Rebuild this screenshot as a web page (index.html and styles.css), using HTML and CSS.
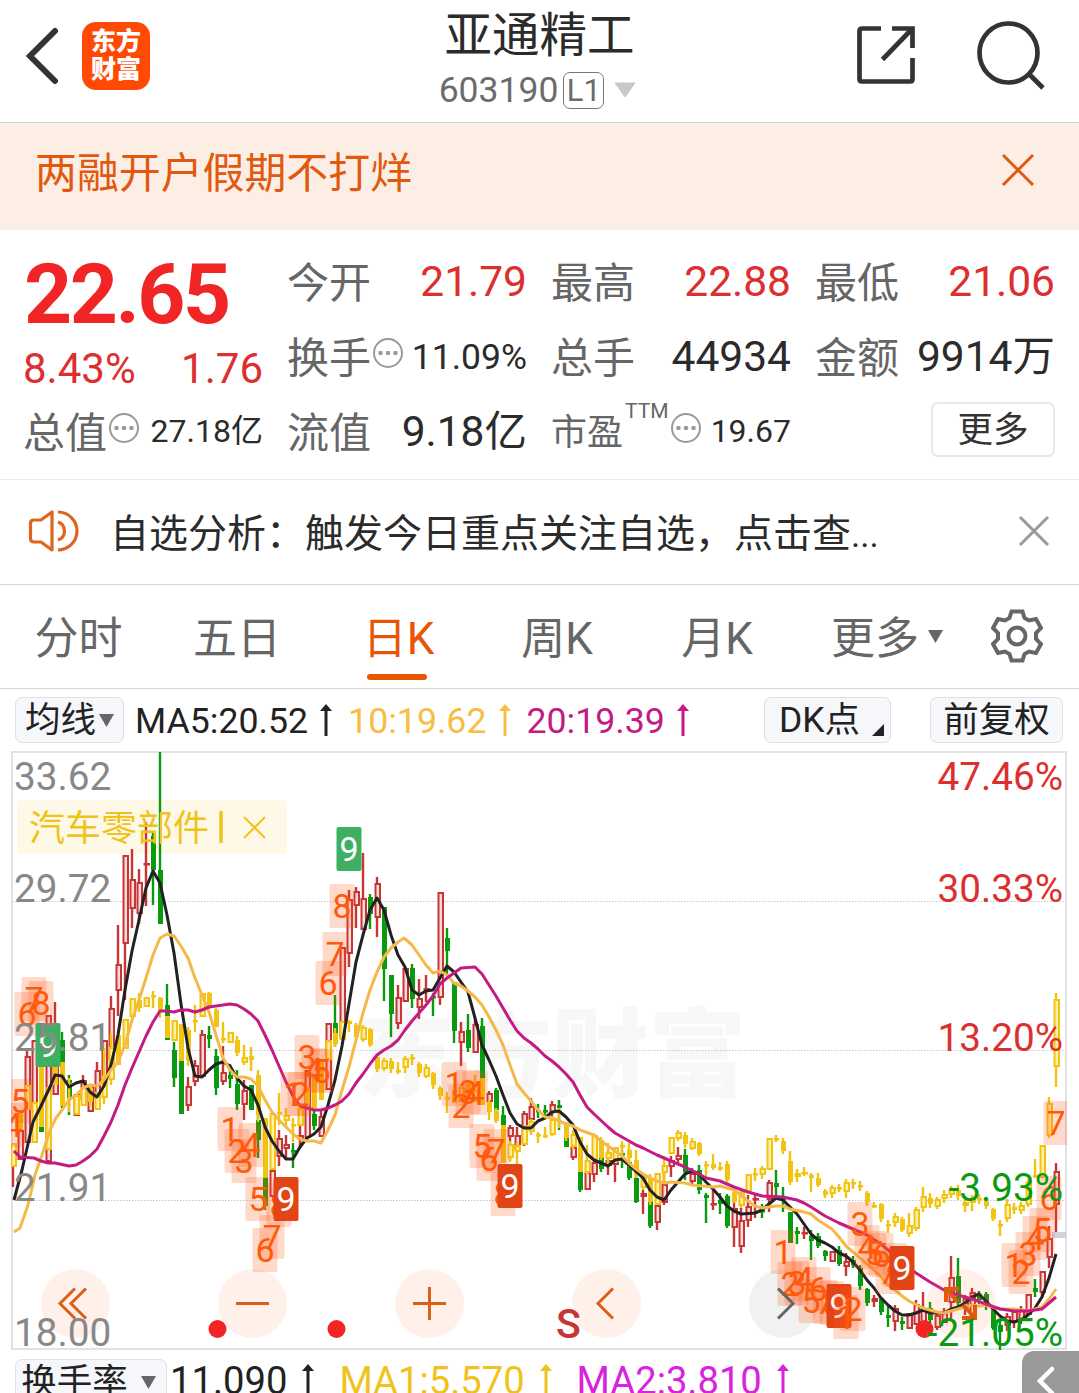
FILE: index.html
```html
<!DOCTYPE html>
<html lang="zh-CN">
<head>
    <meta charset="UTF-8">
    <meta name="viewport" content="width=device-width, initial-scale=1.0">
    <title>亚通精工 603190</title>
    <link rel="stylesheet" href="styles.css">
</head>
<body>
    <div class="header">
        <div class="header-left">
            <svg class="back" width="34" height="58" viewBox="0 0 34 58"><path d="M30 4L5 29L30 54"/></svg>
            <div class="logo"><span>东方</span><span>财富</span></div>
        </div>
        <div class="header-title">
            <h1>亚通精工</h1>
            <div class="code">
                <span>603190</span>
                <span class="level">L1</span>
                <svg width="22" height="16" viewBox="0 0 22 16"><path d="M1 1H21L11 15Z" fill="#c8c8c8" stroke="#c8c8c8" stroke-linejoin="round"/></svg>
            </div>
        </div>
        <div class="header-right">
            <svg class="line-icon" width="60" height="60" viewBox="0 0 60 60"><path d="M25 3.500H6Q3.500 3.500 3.500 6V54Q3.500 56.500 6 56.500H54Q56.500 56.500 56.500 54V33M36 3.500H56.500V23M56 4L26.500 34.500"/></svg>
            <svg class="line-icon" width="70" height="70" viewBox="0 0 70 70"><ellipse cx="32.500" cy="33" rx="29" ry="29.500"/><path d="M53 54L67 68"/></svg>
        </div>
    </div>

    <div class="banner">
        <span>两融开户假期不打烊</span>
        <svg width="34" height="34" viewBox="0 0 34 34"><path d="M2 2L32 32M32 2L2 32"/></svg>
    </div>

    <div class="quote">
        <div class="price-block">
            <div class="price">22.65</div>
            <div class="change"><span>8.43%</span><span>1.76</span></div>
        </div>
        <div class="cell"><label>今开</label><b class="up">21.79</b></div>
        <div class="cell"><label>最高</label><b class="up">22.88</b></div>
        <div class="cell"><label>最低</label><b class="up">21.06</b></div>
        <div class="cell"><label>换手</label><i class="dots"></i><b class="medium">11.09%</b></div>
        <div class="cell"><label>总手</label><b>44934</b></div>
        <div class="cell"><label>金额</label><b class="unit">9914万</b></div>
        <div class="cell"><label>总值</label><i class="dots"></i><b class="small unit">27.18亿</b></div>
        <div class="cell"><label>流值</label><b class="unit">9.18亿</b></div>
        <div class="cell"><label class="pe">市盈<sup>TTM</sup></label><i class="dots"></i><b class="small">19.67</b></div>
        <div class="cell"><button class="more">更多</button></div>
    </div>

    <div class="notice">
        <svg class="speaker" width="52" height="44" viewBox="0 0 52 44"><path d="M24 3V41L13 33H6Q2.500 33 2.500 29.500V14.500Q2.500 11 6 11H13ZM30 3A19 19 0 0 1 30 41M30 13A9.500 9.500 0 0 1 30 31"/></svg>
        <p>自选分析：触发今日重点关注自选，点击查<span>...</span></p>
        <svg class="close" width="32" height="32" viewBox="0 0 32 32"><path d="M2 2L30 30M30 2L2 30"/></svg>
    </div>

    <div class="tabs">
        <span>分时</span>
        <span>五日</span>
        <span class="active">日K</span>
        <span>周K</span>
        <span>月K</span>
        <div class="tabs-more">
            <span>更多</span>
            <svg width="15" height="13" viewBox="0 0 15 13"><path d="M0 0H15L7.500 13Z" fill="#666"/></svg>
            <svg class="gear" width="52" height="54" viewBox="-26 -27 52 54"><circle r="8.500"/><path d="M-5.500 -24.500H5.500L7.500 -18L12 -15.500L19 -17L24 -8L19 -3V3L24 8L19 17L12 15.500L7.500 18L5.500 24.500H-5.500L-7.500 18L-12 15.500L-19 17L-24 8L-19 3V-3L-24 -8L-19 -17L-12 -15.500L-7.500 -18Z"/></svg>
        </div>
    </div>

    <div class="ma-row">
        <div class="chip chip-ma">均线<svg width="15" height="13" viewBox="0 0 15 13"><path d="M0 0H15L7.500 13Z" fill="#666"/></svg></div>
        <span class="ma5">MA5:20.52</span><svg class="arrow ma5" viewBox="0 0 12 32"><path d="M6 0L12 7H7.500V32H4.500V7H0Z"/></svg>
        <span class="ma10">10:19.62</span><svg class="arrow ma10" viewBox="0 0 12 32"><path d="M6 0L12 7H7.500V32H4.500V7H0Z"/></svg>
        <span class="ma20">20:19.39</span><svg class="arrow ma20" viewBox="0 0 12 32"><path d="M6 0L12 7H7.500V32H4.500V7H0Z"/></svg>
        <div class="chip chip-dk">DK点<svg width="12" height="12" viewBox="0 0 12 12"><path d="M12 0V12H0Z" fill="#222"/></svg></div>
        <div class="chip chip-fq">前复权</div>
    </div>

    <svg class="chart" id="chart" width="1079" height="600" viewBox="0 751 1079 600"></svg>

    <div class="turnover-row">
        <div class="chip chip-turnover">换手率<svg width="15" height="13" viewBox="0 0 15 13"><path d="M0 0H15L7.500 13Z" fill="#666"/></svg></div>
        <span class="ma5">11.090</span><svg class="arrow ma5" viewBox="0 0 12 32"><path d="M6 0L12 7H7.500V32H4.500V7H0Z"/></svg>
        <span class="vol1">MA1:5.570</span><svg class="arrow vol1" viewBox="0 0 12 32"><path d="M6 0L12 7H7.500V32H4.500V7H0Z"/></svg>
        <span class="vol2">MA2:3.810</span><svg class="arrow vol2" viewBox="0 0 12 32"><path d="M6 0L12 7H7.500V32H4.500V7H0Z"/></svg>
        <div class="drawer"><svg width="18" height="30" viewBox="0 0 18 30"><path d="M15 3L3 15L15 27"/></svg></div>
    </div>

    <script src="chart.js"></script>
</body>
</html>
```

FILE: styles.css
```css
* {
    margin: 0;
    padding: 0;
    box-sizing: border-box;
}

body {
    width: 1079px;
    height: 1393px;
    overflow: hidden;
    background-color: #fff;
    color: #2b2b2b;
    font-family: Roboto, "Noto Sans CJK SC", sans-serif;
}

svg {
    flex: none;
    fill: none;
}

/* header */
.header {
    display: grid;
    grid-template-columns: 300px 1fr 300px;
    height: 123px;
    border-bottom: 1px solid #d3d5d9;
}

.header-left {
    display: flex;
    align-items: flex-start;
    padding: 22px 0 0 25px;
}

.back {
    margin-top: 5px;
    stroke: #333;
    stroke-width: 6;
    stroke-linecap: round;
}

.logo {
    display: flex;
    flex-direction: column;
    justify-content: center;
    align-items: center;
    width: 68px;
    height: 68px;
    margin-left: 23px;
    border-radius: 14px;
    background-color: #ff4a05;
    color: #fff;
    font-size: 25px;
    font-weight: 900;
    line-height: 28px;
}

.header-title {
    display: flex;
    flex-direction: column;
    align-items: center;
}

.header-title h1 {
    height: 71px;
    font-size: 47.5px;
    font-weight: 400;
    line-height: 73px;
}

.code {
    display: flex;
    align-items: center;
    height: 38px;
    margin-right: 4px;
    color: #6b6b6b;
    font-size: 35.500px;
}

.level {
    width: 41px;
    height: 37px;
    margin: 0 10px 0 5px;
    border: 1px solid #777;
    border-radius: 7px;
    font-size: 31px;
    line-height: 35px;
    text-align: center;
}

.header-right {
    display: flex;
    align-items: flex-start;
    justify-content: flex-end;
    gap: 60px;
    padding: 20px 33px 0 0;
}

.line-icon {
    stroke: #333;
    stroke-width: 4.700;
}

.line-icon:first-child {
    margin-top: 5px;
}

/* promo banner */
.banner {
    display: flex;
    align-items: center;
    justify-content: space-between;
    height: 107px;
    padding: 0 44px 14px 35px;
    background-color: #fceee5;
    color: #e0590f;
    font-size: 41.900px;
}

.banner svg {
    stroke: #e0590f;
    stroke-width: 3;
}

/* quote */
.quote {
    display: grid;
    grid-template-columns: repeat(4, 239px);
    grid-template-rows: repeat(3, 75px);
    column-gap: 25px;
    height: 250px;
    padding: 14px 0 0 24px;
    border-bottom: 1px solid #ececec;
}

.price-block {
    grid-row: span 2;
    color: #f12525;
}

.price {
    height: 100px;
    font-size: 84px;
    font-weight: 700;
    line-height: 101px;
    letter-spacing: -2.500px;
}

.change {
    display: flex;
    justify-content: space-between;
    margin-left: -1px;
    color: #dc2f2f;
    font-size: 42px;
    line-height: 50px;
}

.cell {
    display: flex;
    align-items: center;
    white-space: nowrap;
}

.cell label {
    margin: -5px 0 0 -1px;
    color: #666;
    font-size: 42px;
}

.cell b {
    margin-left: auto;
    font-size: 42.500px;
    font-weight: 400;
}

.cell b.up {
    color: #dc2f2f;
}

.cell b.medium {
    font-size: 35.500px;
}

.cell b.small {
    margin-top: -2px;
    font-size: 32px;
}

.cell b.unit {
    margin-top: -8px;
}

.dots {
    width: 30px;
    height: 30px;
    margin: -8px 0 0 2px;
    border: 2px solid #999;
    border-radius: 50%;
    background: radial-gradient(circle, #999 2px, transparent 2.500px) center / 7.500px 26px repeat-x content-box;
    padding: 0 2px;
}

.cell .pe {
    display: flex;
    font-size: 36px;
}

.pe sup {
    margin-left: 2px;
    font-size: 21px;
    line-height: 16px;
}

.more {
    width: 124px;
    height: 55px;
    margin: -4px 0 0 auto;
    border: 2px solid #e8e8ea;
    border-radius: 7px;
    background-color: #fff;
    color: #333;
    font-family: inherit;
    font-size: 35.500px;
    line-height: 48px;
}

/* notice */
.notice {
    display: flex;
    align-items: center;
    height: 105px;
    padding: 0 29px 2px 28px;
    border-bottom: 1px solid #d8d8d8;
    font-size: 39px;
}

.speaker {
    stroke: #de6420;
    stroke-width: 3.200;
    stroke-linejoin: round;
}

.notice p {
    margin: -3px 0 0 30px;
}

.notice p span {
    font-size: 35px;
}

.close {
    margin-left: auto;
    stroke: #999;
    stroke-width: 3;
}

/* period tabs */
.tabs {
    display: grid;
    grid-template-columns: 157px repeat(4, 160px) 1fr;
    height: 104px;
    border-bottom: 1px solid #d8d8d8;
    color: #666;
    font-size: 44px;
    line-height: 109px;
    text-align: center;
}

.tabs .active {
    position: relative;
    padding-left: 3px;
    color: #ea5504;
}

.tabs .active::after {
    content: "";
    position: absolute;
    left: 50px;
    top: 89px;
    width: 60px;
    height: 6px;
    border-radius: 3px;
    background-color: #ea5504;
}

.tabs-more {
    display: flex;
    align-items: flex-start;
    height: 103px;
    padding-left: 34px;
}

.tabs-more svg {
    margin: 45px 0 0 9px;
}

.tabs-more .gear {
    margin: 24px 0 0 48px;
    stroke: #666;
    stroke-width: 4;
}

/* moving average bar */
.ma-row,
.turnover-row {
    display: flex;
    align-items: center;
    white-space: nowrap;
}

.ma-row {
    height: 62px;
    padding: 0 16px 0 15px;
    font-size: 35.700px;
}

.ma-row span {
    padding-top: 1px;
}

.chip {
    display: flex;
    align-items: center;
    justify-content: center;
    height: 46px;
    border: 1px solid #dfe1e6;
    border-radius: 7px;
    background-color: #f6f7fa;
    color: #222;
    font-size: 35.500px;
    line-height: 46px;
}

.chip-ma {
    width: 109px;
    margin-right: 11px;
}

.chip-ma svg {
    margin-left: 3px;
}

.chip-dk {
    width: 127px;
    margin-left: auto;
    padding-left: 8px;
}

.chip-dk svg {
    align-self: flex-end;
    margin: 0 0 6px 12px;
}

.chip-fq {
    width: 133px;
    margin-left: 39px;
}

.arrow {
    width: 12px;
    height: 32px;
    margin: 0 16px 0 12px;
    fill: currentColor;
}

.ma5 { color: #222; }
.ma10 { color: #f7bd45; }
.ma20 { color: #c41a84; }
.vol1 { color: #f0c31c; }
.vol2 { color: #d723dd; }

/* chart */
.chart {
    display: block;
}

.chart .grid {
    stroke: #c9c9c9;
    stroke-dasharray: 1.500 1.500;
}

.chart .frame {
    stroke: #e2e2e4;
    stroke-width: 2;
}

.chart .watermark {
    fill: #f7f7f7;
    font-size: 97px;
    font-weight: 900;
}

.chart .red { stroke: #c83535; fill: #fbdcdc; }
.chart .green { stroke: #0a9a10; fill: #0a9a10; }
.chart .yellow { stroke: #f3c312; fill: #fff0a8; }
.chart .solid { fill: #f3c312; }

.chart .line {
    fill: none;
    stroke-width: 3;
    stroke-linejoin: round;
}

.chart .tag { fill: #ff5a14; fill-opacity: 0.23; }
.chart .tag-green { fill: #3fb063; }
.chart .tag-red { fill: #e24416; }

.chart .tag-text {
    fill: #ff5a0a;
    font-size: 34px;
    text-anchor: middle;
}

.chart .tag-white { fill: #fff; }

.chart .axis {
    fill: #888;
    font-size: 38.700px;
}

.chart .rise { fill: #dc2f2f; text-anchor: end; }
.chart .fall { fill: #0a9a10; text-anchor: end; }

.chart .sector-bg { fill: #fef3cf; fill-opacity: 0.5; }
.chart .sector { fill: #f0c31c; font-size: 36px; }
.chart .sector-x { stroke: #f0c31c; stroke-width: 2; }
.chart .sector-bar { stroke: #f0c31c; stroke-width: 3.500; }

.chart .round { fill: #fb7a3c; fill-opacity: 0.11; }
.chart .round-off { fill: #000; fill-opacity: 0.055; }
.chart .round-icon { stroke: #dc5f18; stroke-width: 3; }
.chart .round-icon-off { stroke: #666; }
.chart .round-icon-scale { stroke: #e2590c; stroke-width: 4; }
.chart .dot { fill: #f22424; }

.chart .sell {
    fill: #c83535;
    font-size: 41px;
    font-weight: 500;
}

/* turnover bar */
.turnover-row {
    height: 42px;
    padding-left: 15px;
    font-size: 38.200px;
    overflow: hidden;
    align-items: flex-start;
    line-height: 60px;
}

.turnover-row .arrow {
    margin: 13px 25px 0 15px;
}

.chip-turnover {
    width: 152px;
    margin: 8px 3px 0 0;
    padding-right: 5px;
    line-height: 45px;
}

.chip-turnover svg {
    margin-left: 13px;
}

.drawer {
    width: 57px;
    height: 60px;
    margin-left: auto;
    padding: 15px 0 0 15px;
    border-radius: 12px 0 0 0;
    background-color: #999;
    line-height: 0;
}

.drawer svg {
    stroke: #fff;
    stroke-width: 4.500;
    stroke-linecap: round;
}
```

FILE: chart.js
```js
const chart = document.getElementById('chart');
const START = 13.5;
const STEP = 7;

// one entry per day: colour, then high,top,bottom,low (or only top,bottom when there are no shadows)
const stock = `r1145,1145,1166,1187 r1130,1160 r1050,1056,1143,1143 r1040,1110 g1060,1132 r1015,1162 r1002,1030,1095,1095 g1032,1040,1062,1108
g1075,1080,1098,1115 r1094,1116 r1075,1080,1100,1104 r1085,1112 r1062,1070,1100,1110 r1040,1080 r996,1008,1060,1060 r925,964,991,1016
r855,855,944,1000 r849,879,909,928 r869,882,914,924 r822,863,864,906 g832,836,870,905 g752,870,924,924 g984,1005,1040,1040 g1042,1050,1078,1087
g1060,1060,1114,1114 r1077,1086,1106,1111 r1060,1065,1082,1086 r1030,1034,1077,1077 g1026,1035,1039,1048 g1049,1056,1088,1095 r1046,1072,1082,1085 g1064,1075,1079,1088
g1070,1084,1104,1110 r1080,1090,1105,1120 g1085,1110 g1100,1120,1140,1158 g1120,1178,1206,1210 r1165,1170,1197,1197 r1130,1138,1157,1166 r1135,1144,1149,1160
g1143,1150,1152,1168 r1120,1135,1140,1149 r1070,1138 g1110,1114,1126,1130 r1110,1116,1137,1137 r1023,1090 g995,1023,1035,1047 r947,1038
r890,899,954,967 r887,891,906,928 r853,898,930,930 g894,897,914,929 r877,883,918,937 g907,907,969,1001 g975,975,1014,1037 r985,997,1024,1029
r968,1002 g964,968,999,1008 r979,998,1008,1019 r975,988,992,1002 g993,996,998,1016 r892,892,998,1005 g928,938,951,975 g982,982,1031,1043
r1022,1031,1043,1066 g1014,1030,1048,1052 r1018,1024,1053,1053 g1018,1026,1080,1090 r1091,1093,1102,1105 g1088,1090,1110,1112 g1106,1115,1160,1160 r1125,1127,1137,1160
r1127,1135,1150,1153 r1111,1113,1143,1146 r1098,1106,1120,1128 g1104,1110,1112,1118 g1105,1110,1112,1118 r1101,1104,1113,1130 g1100,1105,1108,1130 g1122,1125,1147,1147
r1140,1147,1158,1160 g1150,1150,1190,1192 r1165,1172,1190,1190 r1155,1162,1175,1182 g1147,1155,1169,1172 r1150,1160,1166,1175 r1155,1160,1165,1182 g1150,1153,1155,1168
g1160,1162,1178,1180 g1175,1178,1202,1203 r1190,1193,1197,1214 g1195,1202,1226,1228 r1195,1205,1223,1230 r1172,1184,1203,1205 r1156,1160,1167,1177 r1147,1155,1160,1164
g1149,1155,1172,1180 r1168,1173,1182,1185 g1165,1170,1190,1194 g1193,1195,1198,1223 r1188,1203,1204,1210 g1193,1200,1204,1214 g1194,1196,1226,1228 r1196,1208,1228,1247
r1208,1220,1247,1253 r1195,1206,1221,1227 r1193,1198,1200,1218 g1204,1210,1212,1218 r1180,1182,1200,1212 g1170,1183,1187,1200 g1187,1197,1200,1212 g1212,1243
g1227,1231,1234,1244 r1227,1232,1233,1239 g1230,1236,1241,1260 g1233,1236,1246,1248 g1250,1251,1256,1261 r1251,1262 g1246,1250,1264,1266 r1253,1261,1267,1276
g1256,1260,1265,1268 g1265,1268,1286,1290 g1288,1289,1303,1306 r1295,1298,1302,1307 g1297,1298,1312,1315 g1306,1315,1318,1327 r1305,1308,1322,1331 g1317,1321,1324,1330
r1313,1329 r1300,1304,1325,1325 r1292,1308,1323,1326 g1302,1308,1320,1327 r1312,1315,1328,1330 r1308,1311,1323,1323 r1256,1277,1303,1320 g1258,1276,1303,1310
r1295,1298,1308,1315 r1288,1292,1318,1322 g1291,1294,1300,1304 g1292,1294,1304,1310 g1308,1310,1328,1330 g1320,1325,1332,1350 r1313,1316,1326,1331 r1308,1311,1322,1328
r1306,1310,1320,1324 r1294,1315 g1279,1288,1292,1297 r1271,1271,1293,1297 r1226,1238,1258,1268 r1163,1171,1205,1232`;

// sector index overlay: o is a hollow candle, s is a solid one
const sector = `o1143,1167 s1110,1130 o1085,1110 o1102,1143 s1045,1127 o1087,1150 s1055,1085 s1062,1106
s1078,1083,1086,1112 o1095,1115 o1087,1106 s1086,1088,1102,1106 o1092,1110 o1048,1075,1098,1104 o1033,1047,1080,1085 s1035,1065
o1019,1049 o998,1017 s993,1000,1008,1012 o997,1007 s991,995,997,1008 s997,998,1012,1018 s1016,1038 o1020,1041
s1024,1061 s1027,1030,1060,1066 s1005,1020,1022,1032 o993,1017 s992,993,1007,1009 s1008,1010,1027,1027 s1022,1038,1040,1043 o1032,1043
s1036,1040,1053,1056 o1045,1057,1063,1065 s1047,1056,1060,1071 s1070,1075,1115,1122 s1118,1178 o1113,1170 s1093,1112,1114,1125 o1108,1115,1121,1127
s1118,1124,1126,1142 o1108,1126 s1087,1105 s1075,1108 s1060,1100 o1040,1060 s1028,1033,1044,1047 o1021,1040
s1020,1021,1024,1032 s1023,1025,1037,1040 o1025,1027,1040,1042 s1028,1029,1045,1047 s1054,1057,1069,1072 o1058,1060,1069,1071 s1058,1061,1069,1073 s1062,1070,1072,1074
o1056,1058,1068,1073 s1054,1057,1059,1065 s1062,1064,1073,1077 o1064,1067,1077,1078 s1072,1073,1085,1089 s1086,1088,1096,1100 s1092,1097,1099,1113 s1090,1103
o1087,1102 s1083,1100 o1075,1090,1102,1102 s1078,1105 s1100,1102,1112,1120 s1108,1111,1121,1123 s1125,1163 o1141,1144,1158,1162
o1142,1145,1152,1165 o1125,1145 o1119,1121,1132,1135 s1132,1134,1135,1143 s1127,1135,1136,1138 o1116,1119,1135,1136 s1108,1112,1114,1128 s1122,1124,1138,1141
o1130,1134,1147,1149 s1137,1172 o1145,1160,1173,1174 o1133,1135,1160,1161 s1137,1140,1158,1160 o1143,1152,1159,1164 o1147,1162 s1141,1145,1147,1158
s1143,1150,1158,1167 s1150,1160,1175,1178 o1173,1176,1188,1190 s1174,1178,1202,1205 o1173,1205 o1156,1165,1173,1183 o1137,1154 o1130,1132,1139,1141
s1132,1135,1144,1148 o1138,1141,1149,1150 s1142,1143,1154,1156 s1161,1164,1165,1178 s1154,1164,1168,1170 s1162,1167,1169,1171 s1161,1164,1180,1182 s1189,1192,1202,1203
o1190,1192,1206,1208 o1174,1192 s1168,1173,1175,1181 o1166,1168,1175,1179 o1138,1170 s1135,1138,1140,1142 s1138,1141,1151,1154 s1151,1161,1182,1185
o1169,1173,1177,1182 o1167,1172,1174,1176 s1173,1175,1178,1192 s1173,1178,1185,1187 s1189,1191,1195,1198 o1185,1187,1194,1198 s1184,1187,1189,1192 o1179,1182,1192,1198
s1179,1182,1183,1189 s1181,1185,1187,1191 s1191,1193,1202,1206 s1202,1205,1206,1208 s1203,1204,1219,1222 s1220,1224,1226,1233 o1213,1216,1223,1227 s1217,1219,1230,1232
o1213,1225,1234,1237 o1207,1209,1229,1231 o1187,1196,1208,1212 s1193,1198,1204,1208 o1197,1199,1207,1209 o1190,1194,1199,1203 o1186,1189,1195,1198 s1185,1190,1196,1200
o1196,1202,1206,1212 o1195,1198,1203,1211 s1194,1198,1200,1204 s1199,1201,1206,1209 s1208,1209,1219,1221 s1220,1224,1226,1236 o1199,1204,1219,1222 s1203,1207,1210,1214
o1202,1205,1211,1214 o1180,1182,1205,1207 s1159,1175,1177,1178 o1145,1178 o1097,1103,1136,1138 o993,999,1067,1087`;

const averages = {
    '#222': '14,1200 22,1170 33,1122 41,1106 50,1087 55,1075 62,1076 69,1087 76,1083 83,1081 90,1092 97,1097 104,1086 111,1065 118,1035 125,990 132,951 139,920 146,888 153,871 160,883 167,915 174,953 181,1004 188,1048 195,1076 202,1077 209,1070 216,1064 223,1062 230,1066 237,1078 244,1086 251,1090 258,1105 265,1127 272,1141 279,1151 286,1159 293,1159 300,1147 307,1138 314,1134 321,1127 328,1105 335,1080 342,1046 349,1004 356,962 363,935 370,910 377,898 384,910 391,935 398,955 405,967 412,990 419,995 426,991 433,990 440,978 447,966 454,972 461,982 468,992 475,1018 482,1045 489,1060 496,1076 503,1095 510,1113 517,1124 524,1128 531,1128 538,1121 545,1118 552,1112 559,1111 566,1117 573,1125 580,1142 587,1154 594,1160 601,1163 608,1166 615,1160 622,1159 629,1165 643,1178 650,1190 657,1197 664,1200 671,1190 678,1182 685,1174 692,1171 699,1174 706,1182 713,1189 720,1197 727,1206 734,1211 741,1214 755,1213 762,1210 769,1204 776,1198 783,1200 790,1207 797,1214 804,1224 811,1234 818,1240 825,1243 832,1247 839,1253 846,1256 853,1262 860,1270 867,1280 874,1288 881,1298 888,1305 895,1311 902,1315 909,1315 916,1313 923,1310 930,1313 944,1313 951,1309 958,1307 965,1303 972,1297 979,1294 986,1301 993,1309 1000,1316 1007,1321 1014,1322 1021,1320 1028,1315 1035,1308 1042,1297 1049,1278 1056,1254',
    '#f5b94a': '14,1232 20,1228 28,1205 35,1175 42,1155 50,1130 56,1118 62,1110 69,1100 76,1095 83,1088 90,1085 97,1086 104,1080 111,1070 118,1062 125,1045 132,1020 139,1000 146,978 153,955 160,938 167,934 174,936 181,946 188,958 195,978 202,995 209,1012 216,1035 223,1058 230,1070 237,1077 244,1077 251,1079 258,1086 265,1100 272,1112 279,1120 286,1127 293,1134 300,1139 307,1141 314,1141 321,1143 328,1130 335,1115 342,1090 349,1067 356,1040 363,1013 370,990 377,972 384,957 391,948 398,942 404,938 412,945 419,955 426,965 433,973 440,971 447,975 454,983 461,986 468,991 475,997 482,1005 489,1017 496,1030 503,1045 510,1065 517,1084 524,1093 531,1101 538,1110 545,1117 552,1118 559,1121 566,1124 573,1126 580,1130 594,1135 601,1141 608,1146 615,1151 622,1156 629,1163 636,1169 643,1174 650,1178 657,1181 664,1183 671,1182 685,1183 692,1185 713,1187 720,1186 734,1190 741,1195 748,1201 755,1206 762,1208 769,1207 776,1206 783,1206 790,1209 804,1212 811,1214 818,1220 832,1229 839,1237 846,1246 853,1252 860,1258 867,1264 874,1270 881,1277 888,1285 895,1290 902,1296 909,1301 923,1308 937,1312 944,1313 951,1311 958,1309 965,1307 972,1305 979,1306 986,1305 993,1307 1000,1309 1014,1309 1028,1311 1035,1309 1042,1307 1049,1299 1056,1289',
    '#c41a84': '14,1151 20,1157 34,1158 41,1161 48,1163 55,1163 69,1166 76,1165 83,1161 90,1156 97,1149 104,1136 111,1122 118,1105 125,1085 132,1068 139,1052 146,1036 153,1022 160,1011 167,1011 174,1012 181,1010 188,1010 195,1012 202,1010 209,1007 223,1005 230,1004 237,1005 244,1009 251,1014 258,1021 265,1035 272,1050 279,1066 286,1082 293,1096 300,1106 307,1108 314,1110 321,1110 328,1108 335,1105 342,1101 349,1094 356,1083 363,1074 370,1064 377,1055 384,1050 391,1046 398,1040 405,1030 412,1021 419,1013 426,1005 433,996 440,984 447,978 454,973 461,968 475,967 482,974 489,985 496,996 503,1008 510,1020 517,1031 524,1038 531,1043 538,1049 545,1056 552,1061 559,1067 566,1074 573,1082 580,1095 587,1107 594,1114 608,1127 615,1133 629,1141 636,1145 643,1148 657,1155 671,1161 685,1167 699,1174 706,1178 720,1181 734,1187 748,1192 762,1196 783,1197 797,1200 804,1203 811,1207 825,1216 839,1223 853,1229 867,1235 881,1244 895,1256 909,1268 916,1273 930,1282 944,1290 958,1295 972,1299 986,1304 1000,1309 1014,1311 1028,1311 1042,1309 1049,1303 1056,1297'
};

// day index, digit, centre y
const tags = [
    [0, 4, 1125], [1, 5, 1101], [2, 6, 1014], [3, 7, 999], [4, 8, 1003], [5, 9, 1045, 'green'],
    [31, 1, 1129], [32, 2, 1151], [33, 3, 1161], [34, 4, 1145], [35, 5, 1199], [36, 6, 1250], [37, 7, 1237], [38, 8, 1205], [39, 9, 1199, 'red'],
    [40, 1, 1094], [41, 2, 1094], [42, 3, 1057], [43, 4, 1070], [44, 5, 1071], [45, 6, 983], [46, 7, 954], [47, 8, 906], [48, 9, 849, 'green'],
    [63, 1, 1084], [64, 2, 1106], [65, 3, 1092], [66, 4, 1093], [67, 5, 1146], [68, 6, 1159], [69, 7, 1151], [70, 8, 1194], [71, 9, 1186, 'red'],
    [110, 1, 1252], [111, 2, 1284], [112, 3, 1283], [113, 4, 1279], [114, 5, 1301], [115, 6, 1289], [116, 7, 1302], [117, 8, 1303], [118, 9, 1306, 'red'],
    [119, 1, 1317], [120, 2, 1309], [121, 3, 1224], [122, 4, 1247], [123, 5, 1253], [124, 6, 1255], [125, 7, 1272], [126, 8, 1265], [127, 9, 1268, 'red'],
    [143, 1, 1265], [144, 2, 1272], [145, 3, 1254], [146, 4, 1238], [147, 5, 1230], [148, 6, 1198], [149, 7, 1123]
];

function candles(series) {
    const names = { r: 'red', g: 'green', o: 'yellow', s: 'yellow solid' };
    return series.split(/\s+/).map(function (item, i) {
        const v = item.slice(1).split(',').map(Number);
        const [high, top, bottom, low] = v.length === 2 ? [v[0], v[0], v[1], v[1]] : v;
        const x = START + i * STEP;
        // falling candles sit a little narrower than the hollow rising ones
        const left = item[0] === 'g' || item[0] === 's' ? x - 1.5 : x - 2;
        const width = item[0] === 'g' || item[0] === 's' ? 3 : 4.5;
        return `<g class="${names[item[0]]}">
            <path stroke-width="2.4" d="M${x - 0.5} ${high}V${top}M${x - 0.5} ${bottom}V${low}"/>
            <rect x="${left}" y="${top + 1}" width="${width}" height="${Math.max(bottom - top - 2, 0.5)}" stroke-width="2"/>
        </g>`;
    }).join('');
}

function drawTags() {
    return tags.map(function ([day, digit, y, color]) {
        const x = START + day * STEP - 0.5;
        return `<rect class="${color ? 'tag-' + color : 'tag'}" x="${x - 12.5}" y="${y - 22}" width="25" height="44" rx="2"/>
            <text class="tag-text ${color ? 'tag-white' : ''}" x="${x}" y="${y + 12}">${digit}</text>`;
    }).join('');
}

let svg = '<defs><clipPath id="plot"><rect x="11" y="751" width="1056" height="600"/></clipPath></defs>';

svg += '<text class="watermark" x="358" y="1089">东方财富</text>';
[901.5, 1050.5, 1200.5].forEach(function (y) {
    svg += `<path class="grid" d="M12 ${y}H1066"/>`;
});
svg += '<rect class="frame" x="12" y="752" width="1054" height="597"/>';

svg += '<rect class="sector-bg" x="17" y="800" width="270" height="54" rx="5"/>';
svg += '<g clip-path="url(#plot)">' + candles(stock) + candles(sector);
Object.keys(averages).forEach(function (color) {
    svg += `<polyline class="line" stroke="${color}" points="${averages[color]}"/>`;
});
svg += '<path d="M1052 1235H1066" stroke="#d0d3d9" stroke-width="6"/>';

// zoom and pan buttons
[75.5, 252.5, 429.5, 606.5, 961].forEach(function (x) {
    svg += `<circle class="round" cx="${x}" cy="1303.5" r="34.5"/>`;
});
svg += '<circle class="round-off" cx="783.5" cy="1303.5" r="34.5"/>';
svg += drawTags() + '</g>';
svg += `<g class="round-icon">
    <path d="M75 1288.500L60 1303.500L75 1318.500M86 1288.500L71 1303.500L86 1318.500"/>
    <path d="M236 1303.500H269M413 1303.500H446M429.500 1287V1320"/>
    <path d="M613 1288.500L598 1303.500L613 1318.500"/>
    <path class="round-icon-off" d="M778 1288.500L793 1303.500L778 1318.500"/>
    <path class="round-icon-scale" d="M959 1289H946V1302M946 1289L958 1302M962 1318H975V1305M975 1318L963 1305"/>
</g>`;

[217.5, 336.5, 924.5].forEach(function (x) {
    svg += `<circle class="dot" cx="${x}" cy="1329" r="9"/>`;
});
svg += '<text class="sell" x="556" y="1338">S</text>';

[['33.62', '47.46%', 790], ['29.72', '30.33%', 902], ['25.81', '13.20%', 1051], ['21.91', '-3.93%', 1201], ['18.00', '-21.05%', 1346]].forEach(function ([price, rate, y]) {
    svg += `<text class="axis" x="14" y="${y}">${price}</text>`;
    svg += `<text class="axis ${rate[0] === '-' ? 'fall' : 'rise'}" x="1063" y="${y}">${rate}</text>`;
});

svg += '<text class="sector" x="29" y="841">汽车零部件</text>';
svg += '<path class="sector-bar" d="M221 811V843"/><path class="sector-x" d="M244 817L265 838M265 817L244 838"/>';

chart.innerHTML = svg;
```
